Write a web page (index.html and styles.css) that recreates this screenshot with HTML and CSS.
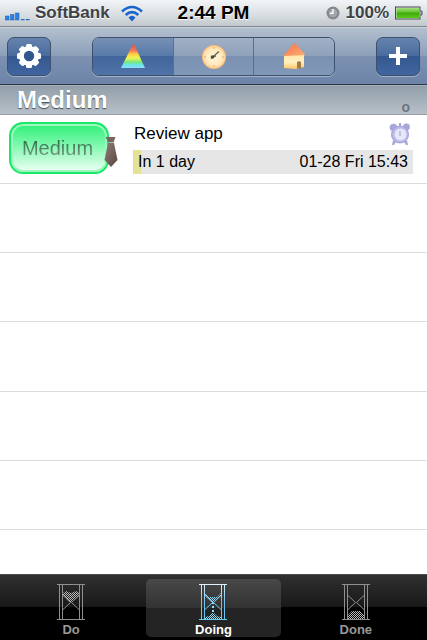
FILE: index.html
```html
<!DOCTYPE html>
<html lang="en">
<head>
    <meta charset="UTF-8">
    <meta name="viewport" content="width=device-width, initial-scale=1.0">
    <title>Tasks - Doing</title>
    <link rel="stylesheet" href="styles.css">
</head>
<body>
    <div class="status-bar">
        <div class="status-left">
            <svg class="signal" width="28" height="12" viewBox="0 0 28 12">
                <g fill="#2d83e2" stroke="#1459b5" stroke-width="0.5">
                    <rect x="1.500" y="5" width="3.500" height="4"/>
                    <rect x="6.500" y="3.500" width="3.500" height="5.500"/>
                    <rect x="11.500" y="2" width="3.500" height="7"/>
                    <rect x="17.500" y="8.500" width="3" height="0.5"/>
                    <rect x="22.500" y="8.500" width="3" height="0.5"/>
                </g>
            </svg>
            <span class="carrier">SoftBank</span>
            <svg width="22" height="17" viewBox="0 0 22 17">
                <g fill="none" stroke="#1764cf" stroke-width="2.6">
                    <path d="M1 6.4Q11-2.4 21 6.4"/>
                    <path d="M4.7 10Q11 4.3 17.3 10"/>
                </g>
                <path d="M7.5 12.6Q11 9 14.5 12.6L11 16.5z" fill="#1764cf"/>
            </svg>
        </div>
        <span class="time">2:44 PM</span>
        <div class="status-right">
            <svg width="14" height="14" viewBox="0 0 14 14">
                <circle cx="7" cy="7" r="6.5" fill="#85898e"/>
                <circle cx="7" cy="7" r="4.3" fill="#a4a8ac"/>
                <path d="M7 3v4.2H4" fill="none" stroke="#fff" stroke-width="1.4"/>
            </svg>
            <span class="percent">100%</span>
            <svg width="28" height="14" viewBox="0 0 28 14">
                <defs>
                    <linearGradient id="charge" x2="0" y2="1">
                        <stop offset="0" stop-color="#a5df83"/>
                        <stop offset="0.4" stop-color="#65c62e"/>
                        <stop offset="0.5" stop-color="#40a80d"/>
                        <stop offset="1" stop-color="#58cb1c"/>
                    </linearGradient>
                </defs>
                <rect x="0.5" y="1" width="24.5" height="12" fill="#dfe5df" stroke="#464a4e"/>
                <rect x="1.500" y="2" width="22.500" height="10" fill="url(#charge)"/>
                <path d="M25.5 5h1.5v4h-1.5" fill="#aaa" stroke="#555"/>
            </svg>
        </div>
    </div>

    <div class="nav-bar">
        <button class="nav-btn" type="button" aria-label="Settings">
            <svg width="26" height="26" viewBox="0 0 26 26">
                <g fill="#fff">
                    <rect x="10" y="1" width="6" height="24" rx="1.5"/>
                    <rect x="10" y="1" width="6" height="24" rx="1.5" transform="rotate(45 13 13)"/>
                    <rect x="10" y="1" width="6" height="24" rx="1.5" transform="rotate(90 13 13)"/>
                    <rect x="10" y="1" width="6" height="24" rx="1.5" transform="rotate(135 13 13)"/>
                    <circle cx="13" cy="13" r="10"/>
                </g>
                <circle cx="13" cy="13" r="5.2" fill="#2f578d"/>
            </svg>
        </button>
        <div class="segments">
            <button class="segment selected" type="button" aria-label="Priority">
                <svg width="26" height="28" viewBox="0 0 26 28">
                    <defs>
                        <linearGradient id="rainbow" x2="0" y2="1">
                            <stop offset="0.05" stop-color="#dc5648"/>
                            <stop offset="0.3" stop-color="#f7775b"/>
                            <stop offset="0.46" stop-color="#ffd442"/>
                            <stop offset="0.6" stop-color="#eef552"/>
                            <stop offset="0.76" stop-color="#79e879"/>
                            <stop offset="0.88" stop-color="#69e4ee"/>
                            <stop offset="1" stop-color="#91dcf8"/>
                        </linearGradient>
                    </defs>
                    <path d="M13.5 1L25 26H1z" fill="url(#rainbow)"/>
                </svg>
            </button>
            <button class="segment" type="button" aria-label="Time">
                <svg width="26" height="28" viewBox="0 0 26 28">
                    <defs>
                        <radialGradient id="dial">
                            <stop offset="0" stop-color="#fff7d7"/>
                            <stop offset="0.7" stop-color="#ffe8bc"/>
                            <stop offset="0.9" stop-color="#ffcf91"/>
                            <stop offset="1" stop-color="#f2b27a"/>
                        </radialGradient>
                    </defs>
                    <circle cx="13" cy="15" r="12" fill="url(#dial)"/>
                    <g fill="#b99d77">
                        <circle cx="13" cy="6" r="0.7"/>
                        <circle cx="13" cy="24" r="0.7"/>
                        <circle cx="4" cy="15" r="0.7"/>
                        <circle cx="22" cy="15" r="0.7"/>
                    </g>
                    <path d="M10 16.5L18 9.500M11 15.500l4-1.500" stroke="#655f50" stroke-width="1.2"/>
                    <circle cx="11.500" cy="15" r="1.800" fill="#504c43"/>
                </svg>
            </button>
            <button class="segment" type="button" aria-label="Place">
                <svg width="26" height="28" viewBox="0 0 26 28">
                    <defs>
                        <linearGradient id="roof" x2="1" y2="1">
                            <stop offset="0" stop-color="#f56e46"/>
                            <stop offset="1" stop-color="#ffb176"/>
                        </linearGradient>
                        <linearGradient id="wall" x2="0" y2="1">
                            <stop offset="0" stop-color="#ffe5a2"/>
                            <stop offset="0.5" stop-color="#fff1c6"/>
                            <stop offset="1" stop-color="#ffc861"/>
                        </linearGradient>
                    </defs>
                    <path d="M3 13h20v12l-9 2-11-1z" fill="url(#wall)"/>
                    <path d="M12 2.500l2-1.500L24.500 13l-10 .5-12.500.5z" fill="url(#roof)"/>
                    <path d="M16 20q2.500-1.500 4 0v6l-4 .5z" fill="#a77843"/>
                </svg>
            </button>
        </div>
        <button class="nav-btn" type="button" aria-label="Add task">
            <svg width="20" height="20" viewBox="0 0 20 20">
                <path d="M8 1h4v7h7v4h-7v7H8v-7H1V8h7z" fill="#fff"/>
            </svg>
        </button>
    </div>

    <div class="section-header">
        <h1>Medium</h1>
        <span class="section-mark">o</span>
    </div>

    <ul class="task-list">
        <li class="task">
            <div class="badge">
                <span class="badge-text">Medium</span>
                <svg class="tie" width="14" height="32" viewBox="0 0 14 32">
                    <defs>
                        <linearGradient id="cloth" x2="1" y2="1">
                            <stop offset="0" stop-color="#8f7c77"/>
                            <stop offset="1" stop-color="#5b4742"/>
                        </linearGradient>
                    </defs>
                    <path d="M1.500 1h10l-2 5.500h-5z" fill="#786560"/>
                    <path d="M4 7h6l3.500 17L7 31 .5 24z" fill="url(#cloth)"/>
                </svg>
            </div>
            <div class="task-info">
                <div class="task-title">
                    <span>Review app</span>
                    <svg width="22" height="22" viewBox="0 0 22 22">
                        <g fill="#a9a7da">
                            <circle cx="4.500" cy="4.500" r="3.800"/>
                            <circle cx="17.500" cy="4" r="3.400"/>
                            <path d="M10 0h2v4h-2zM4 17l3 2-2 3H3zM18 17l-3 2 2 3h2z"/>
                        </g>
                        <circle cx="11" cy="11.500" r="8.500" fill="#b9b8e6" stroke="#a3a1d6"/>
                        <circle cx="11.500" cy="11.500" r="6" fill="#e6e7fa"/>
                        <path d="M11 8v5" stroke="#a09fb8"/>
                    </svg>
                </div>
                <div class="due-bar">
                    <div class="due-progress" style="width: 3%"></div>
                    <span class="due-left">In 1 day</span>
                    <span>01-28 Fri 15:43</span>
                </div>
            </div>
        </li>
        <li></li>
        <li></li>
        <li></li>
        <li></li>
        <li></li>
        <li></li>
    </ul>

    <svg class="defs" width="0" height="0" aria-hidden="true">
        <defs>
            <pattern id="sand" width="2" height="2" patternUnits="userSpaceOnUse">
                <rect width="1" height="1" fill="#bbb"/>
                <rect x="1" y="1" width="1" height="1" fill="#bbb"/>
            </pattern>
            <pattern id="sandBlue" width="2" height="2" patternUnits="userSpaceOnUse">
                <rect width="1" height="1" fill="#8be0ff"/>
                <rect x="1" y="1" width="1" height="1" fill="#8be0ff"/>
            </pattern>
            <linearGradient id="glow" gradientUnits="userSpaceOnUse" x1="0" y1="0" x2="0" y2="36">
                <stop offset="0" stop-color="#e2f4fc"/>
                <stop offset="0.5" stop-color="#70bee9"/>
                <stop offset="1" stop-color="#62cff7"/>
            </linearGradient>
            <g id="glass" fill="none">
                <path d="M0 .5h28M0 35.500h28"/>
                <path d="M2.500 1v34M5.500 1v34M22.500 1v34M25.500 1v34"/>
                <path d="M5.500 9v2l8 7.500-8 7.500v9M22.500 9v2l-8 7.500 8 7.500v9"/>
            </g>
        </defs>
    </svg>

    <nav class="tab-bar">
        <a class="tab" href="#do">
            <svg width="28" height="36" viewBox="0 0 28 36">
                <path d="M6 9l3-2 5 2 5-2 4 2v2l-8 7h-2l-7-7z" fill="url(#sand)"/>
                <use href="#glass" stroke="#909090"/>
            </svg>
            <span>Do</span>
        </a>
        <a class="tab active" href="#doing">
            <svg width="28" height="36" viewBox="0 0 28 36">
                <path d="M6 9l4 4h8l5-5v3l-8 7h-2l-7-7z" fill="url(#sandBlue)"/>
                <path d="M6 35v-2l4-1 3-3h2l3 3 4 1v2z" fill="url(#sandBlue)"/>
                <path d="M14 18v12" stroke="#8be0ff" stroke-width="2" stroke-dasharray="2 2"/>
                <use href="#glass" stroke="url(#glow)"/>
            </svg>
            <span>Doing</span>
        </a>
        <a class="tab" href="#done">
            <svg width="28" height="36" viewBox="0 0 28 36">
                <path d="M6 35v-4l4-4h8l4 4v4z" fill="url(#sand)"/>
                <use href="#glass" stroke="#909090"/>
            </svg>
            <span>Done</span>
        </a>
    </nav>
</body>
</html>
```
FILE: styles.css
```css
* {
    box-sizing: border-box;
}

body {
    font-family: Helvetica, "Liberation Sans", Arial, sans-serif;
    background: #fff;
    color: #000;
    margin: 0;
    min-height: 100vh;
    display: flex;
    flex-direction: column;
}

svg {
    display: block;
    flex-shrink: 0;
}

button {
    padding: 0;
    border: none;
    background: none;
    cursor: pointer;
}

/* status bar */
.status-bar {
    height: 27px;
    padding: 0 4px;
    display: grid;
    grid-template-columns: 1fr auto 1fr;
    align-items: center;
    background: linear-gradient(#f2f5f7, #dce1e5 50%, #c2c9cd);
    border-bottom: 1px solid #7f858d;
    font-size: 17px;
    font-weight: bold;
    text-shadow: 0 1px 0 #fff;
}

.status-left,
.status-right {
    display: flex;
    align-items: center;
}

.status-right {
    justify-content: flex-end;
    gap: 6px;
}

.signal {
    margin-top: 8px;
}

.carrier {
    color: #3e4146;
    margin: 0 11px 0 3px;
}

.time {
    font-size: 19px;
}

.percent {
    color: #3e4146;
}

/* navigation */
.nav-bar {
    height: 58px;
    padding: 0 7px;
    display: flex;
    align-items: center;
    justify-content: space-between;
    background: linear-gradient(#b2bfce, #8c9fb9 50%, #7d92b2 50%, #6c84a8);
    border-top: 1px solid #cbd4df;
    border-bottom: 1px solid #2c3548;
}

.nav-btn,
.segments {
    height: 39px;
    border: 1px solid #3d516f;
    border-radius: 7px;
    box-shadow: 0 1px 0 rgba(255, 255, 255, 0.35);
}

.nav-btn {
    width: 44px;
    display: flex;
    align-items: center;
    justify-content: center;
    background: linear-gradient(#6683ad, #486b9d 50%, #34598f 50%, #4265a1);
}

.segments {
    width: 59%;
    display: flex;
    overflow: hidden;
}

.segment {
    flex: 1;
    display: flex;
    align-items: center;
    justify-content: center;
    background: linear-gradient(#a1b0c5, #8ea0ba 50%, #7b91b1 50%, #8298b8);
}

.segment + .segment {
    border-left: 1px solid #566f93;
}

.segment.selected {
    background: linear-gradient(#7790b4, #567aa9 50%, #42669c 50%, #5074a8);
}

/* list */
.section-header {
    height: 30px;
    padding: 0 17px;
    display: flex;
    justify-content: space-between;
    background: linear-gradient(#929fa9, #b7c0c9);
    border-top: 1px solid #a7b1b9;
    border-bottom: 1px solid #989ea4;
}

h1 {
    margin: 0;
    font-size: 24px;
    line-height: 28px;
    color: #fff;
    text-shadow: 0 1px 1px #444d55;
}

.section-mark {
    align-self: flex-end;
    font-size: 14px;
    line-height: 14px;
    font-weight: bold;
    color: #6d7680;
}

.task-list {
    flex: 1;
    margin: 0;
    padding: 0;
    list-style: none;
    display: grid;
    grid-template-rows: repeat(6, 11fr) 7fr;
}

.task-list li {
    border-bottom: 1px solid #dcdcdc;
}

.task-list li:last-child {
    border-bottom: none;
}

.task {
    display: flex;
    align-items: center;
    gap: 24px;
    padding: 0 14px 2px 9px;
}

.badge {
    position: relative;
    width: 100px;
    height: 52px;
    flex-shrink: 0;
    display: flex;
    align-items: center;
    justify-content: center;
    border: 2px solid #19e868;
    border-radius: 14px;
    background: linear-gradient(#2df078, #8bf9b5 50%, #f0fff5);
    box-shadow: inset 0 0 0 2px #9df8bf;
}

.badge-text {
    padding-right: 3px;
    font-size: 20px;
    background: linear-gradient(#1c6a3c, #8a9d91);
    background-clip: text;
    -webkit-background-clip: text;
    color: transparent;
}

.tie {
    position: absolute;
    right: -11px;
    bottom: 4px;
}

.task-info {
    flex: 1;
}

.task-title {
    display: flex;
    align-items: center;
    justify-content: space-between;
    height: 24px;
    margin-bottom: 4px;
    padding: 0 2px 0 1px;
    font-size: 17px;
}

.due-bar {
    position: relative;
    display: flex;
    justify-content: space-between;
    height: 24px;
    padding: 0 5px;
    background: #e6e6e6;
    font-size: 16px;
    line-height: 24px;
}

.due-progress {
    position: absolute;
    left: 0;
    top: 0;
    height: 100%;
    background: #e5e197;
}

.due-left {
    position: relative;
}

/* tab bar */
.defs {
    position: absolute;
}

.tab-bar {
    height: 66px;
    display: flex;
    background: linear-gradient(#303030, #181818 50%, #000 50%);
    border-top: 1px solid #4b504d;
}

.tab {
    flex: 1;
    margin: 4px 4px 3px;
    padding-top: 5px;
    display: flex;
    flex-direction: column;
    align-items: center;
    gap: 3px;
    border-radius: 5px;
    color: #999;
    font-size: 13px;
    line-height: 14px;
    font-weight: bold;
    text-decoration: none;
}

.tab.active {
    background: linear-gradient(#484848, #333 50%, #242424 50%);
    color: #fff;
}
```
